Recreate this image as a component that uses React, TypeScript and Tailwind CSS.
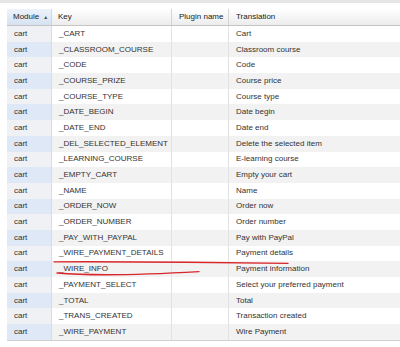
import React from "react";

const rows: [string, string][] = [
  ["_CART", "Cart"],
  ["_CLASSROOM_COURSE", "Classroom course"],
  ["_CODE", "Code"],
  ["_COURSE_PRIZE", "Course price"],
  ["_COURSE_TYPE", "Course type"],
  ["_DATE_BEGIN", "Date begin"],
  ["_DATE_END", "Date end"],
  ["_DEL_SELECTED_ELEMENT", "Delete the selected item"],
  ["_LEARNING_COURSE", "E-learning course"],
  ["_EMPTY_CART", "Empty your cart"],
  ["_NAME", "Name"],
  ["_ORDER_NOW", "Order now"],
  ["_ORDER_NUMBER", "Order number"],
  ["_PAY_WITH_PAYPAL", "Pay with PayPal"],
  ["_WIRE_PAYMENT_DETAILS", "Payment details"],
  ["_WIRE_INFO", "Payment information"],
  ["_PAYMENT_SELECT", "Select your preferred payment"],
  ["_TOTAL", "Total"],
  ["_TRANS_CREATED", "Transaction created"],
  ["_WIRE_PAYMENT", "Wire Payment"],
];

export default function App() {
  return (
    <div className="relative w-[400px] h-[347px] overflow-hidden bg-white font-['Liberation_Sans',Arial,sans-serif] text-[8px] text-[#333]">
      <div className="h-[3px] bg-[#e6e6e6]" />
      <div className="h-[6px]" />
      <div className="ml-[7px]">
        <div className="grid grid-cols-[45px_120px_57px_1fr] h-[17px] border-b border-[#c5c5c5] text-[#222]">
          <div className="flex items-center pl-[6px] border-r border-[#cfd6e0] bg-gradient-to-b from-[#eef3fb] to-[#d6e2f2]">
            <span>Module</span>
            <span className="ml-[4px] text-[5px] leading-none text-[#444]">▲</span>
          </div>
          <div className="flex items-center pl-[6px] border-r border-[#d4d4d4] bg-gradient-to-b from-white to-[#ececec]">Key</div>
          <div className="flex items-center pl-[7px] border-r border-[#d4d4d4] bg-gradient-to-b from-white to-[#ececec]">Plugin name</div>
          <div className="flex items-center pl-[7px] bg-gradient-to-b from-white to-[#ececec]">Translation</div>
        </div>
        {rows.map(([key, tr], i) => {
          const alt = i % 2 === 1;
          return (
            <div key={key} className={`grid grid-cols-[45px_120px_57px_1fr] h-[15.7px] ${alt ? "bg-[#f2f2f2]" : "bg-white"}`}>
              <div className={`flex items-center pl-[7px] border-r border-[#dcdcdc] ${alt ? "bg-[#dfe8f6]" : "bg-[#eff1f4]"}`}>cart</div>
              <div className="flex items-center pl-[7px] border-r border-[#e2e2e2] whitespace-nowrap">{key}</div>
              <div className="border-r border-[#e2e2e2]" />
              <div className="flex items-center pl-[7px] whitespace-nowrap">{tr}</div>
            </div>
          );
        })}
        <div className="border-t border-[#cfcfcf]" />
      </div>
      <svg className="absolute left-0 top-0 pointer-events-none" width="400" height="347" viewBox="0 0 400 347">
        <path d="M 54 261.8 Q 170 261.5 288 263.4" stroke="#d8262b" strokeWidth="1.3" fill="none" strokeLinecap="round" />
        <path d="M 57 273 C 85 275.4, 140 275, 199 271.6" stroke="#d8262b" strokeWidth="1.3" fill="none" strokeLinecap="round" />
      </svg>
    </div>
  );
}
